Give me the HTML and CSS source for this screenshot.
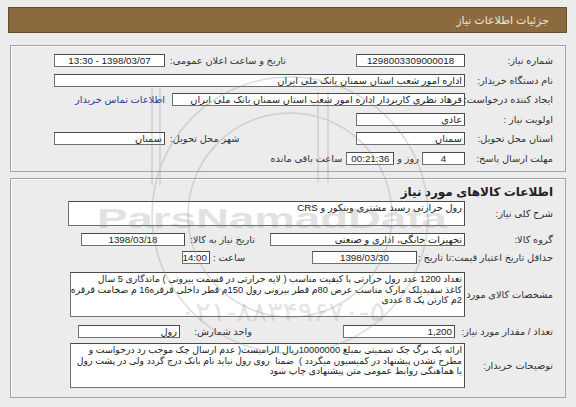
FILE: index.html
```html
<!DOCTYPE html>
<html lang="fa" dir="rtl">
<head>
<meta charset="utf-8">
<title>جزئیات اطلاعات نیاز</title>
<link rel="stylesheet" href="styles.css">
</head>
<body>
<div class="page">
  <div class="header"><span class="header-title">جزئیات اطلاعات نیاز</span></div>

  <div class="panel p1">
    <div class="row">
      <div class="lbl">شماره نیاز:</div>
      <div class="box w109 center">1298003309000018</div>
      <div class="grp">
        <div class="lbl2">تاریخ و ساعت اعلان عمومی:</div>
        <div class="box w111 center">1398/03/07 - 13:30</div>
      </div>
    </div>
    <div class="row">
      <div class="lbl">نام دستگاه خریدار:</div>
      <div class="box grow">اداره امور شعب استان سمنان بانک ملی ایران</div>
    </div>
    <div class="row">
      <div class="lbl">ایجاد کننده درخواست:</div>
      <div class="box w293">فرهاد نظری کاربردار اداره امور شعب استان سمنان بانک ملی ایران</div>
      <a class="link" href="#">اطلاعات تماس خریدار</a>
    </div>
    <div class="row">
      <div class="lbl">اولویت نیاز :</div>
      <div class="box w109">عادی</div>
    </div>
    <div class="row">
      <div class="lbl">استان محل تحویل:</div>
      <div class="box w109">سمنان</div>
      <div class="grp">
        <div class="lbl2">شهر محل تحویل:</div>
        <div class="box w111">سمنان</div>
      </div>
    </div>
    <div class="row">
      <div class="lbl">مهلت ارسال پاسخ:</div>
      <div class="box w43 center">4</div>
      <span class="txt mid">روز و</span>
      <div class="box w48 center">00:21:36</div>
      <span class="txt after">ساعت باقی مانده</span>
    </div>
  </div>

  <div class="panel p2">
    <div class="title">اطلاعات کالاهای مورد نیاز</div>
    <div class="row r-area1">
      <div class="lbl">شرح کلی نیاز:</div>
      <div class="area a25">رول حرارتی رسید مشتری وینکور و CRS</div>
    </div>
    <div class="row r-line m7">
      <div class="lbl">گروه کالا:</div>
      <div class="box w195">تجهیزات خانگی، اداری و صنعتی</div>
      <div class="cell need-date">تاریخ نیاز به کالا:</div>
      <div class="box w104 center">1398/03/18</div>
    </div>
    <div class="row r-line m5">
      <div class="cell-pair">
        <span>حداقل تاریخ اعتبار قیمت:</span>
        <span>تا تاریخ :</span>
      </div>
      <div class="box w105 center">1398/03/30</div>
      <div class="cell time-lbl">ساعت :</div>
      <div class="box w28 center">14:00</div>
    </div>
    <div class="row r-area m8">
      <div class="lbl">مشخصات کالای مورد نیاز:</div>
      <div class="area a45">تعداد 1200 عدد رول حرارتی با کیفیت مناسب ( لایه حرارتی در قسمت بیرونی ) ماندگاری 5 سال<br>کاغذ سفیدبلک مارک مناسب عرض 80م قطر بیرونی رول 150م قطر داخلی قرقره16 م ضخامت قرقره<br>2م کارتن پک 8 عددی</div>
    </div>
    <div class="row r-line m8">
      <div class="lbl">تعداد / مقدار مورد نیاز:</div>
      <div class="box w112 qty">1,200</div>
      <div class="cell unit">واحد شمارش:</div>
      <div class="box w102">رول</div>
    </div>
    <div class="row r-area m5">
      <div class="lbl">توضیحات خریدار:</div>
      <div class="area a45">ارائه یک برگ چک تضمینی بمبلغ 10000000ریال الزامیست( عدم ارسال چک موجب رد درخواست و<br>مطرح نشدن پیشنهاد در کمیسیون میگردد )&nbsp; ضمنا&nbsp; روی رول نباید نام بانک درج گردد ولی در پشت رول<br>با هماهنگی روابط عمومی متن پیشنهادی چاپ شود</div>
    </div>
  </div>

  <svg class="wm" viewBox="0 0 576 407" width="576" height="407" aria-hidden="true">
    <g class="wm-lines">
      <circle cx="290" cy="215" r="138"/>
      <circle cx="290" cy="215" r="102"/>
      <path d="M152 88 V185 M160 88 V185 M318 92 V182 M328 92 V182"/>
    </g>
    <text class="wm-brand" x="97" y="228" textLength="350" lengthAdjust="spacingAndGlyphs">ParsNamadData</text>
    <text class="wm-phone" x="180" y="321" textLength="205" lengthAdjust="spacingAndGlyphs">۰۲۱-۸۸۳۴۹۶۷۰-۵</text>
  </svg>
</div>
</body>
</html>
```
FILE: styles.css
```css
html, body {
  margin: 0;
  padding: 0;
  background: #ececec;
}
body {
  font-family: "Liberation Sans", "DejaVu Sans", sans-serif;
  font-size: 9.8px;
  color: #333;
}
.page {
  position: relative;
  width: 576px;
  height: 407px;
  box-sizing: border-box;
  padding: 7px 9px 0 8px;
  overflow: hidden;
}
.header {
  height: 26px;
  box-sizing: border-box;
  background: #8b6a3f;
  border: 1px solid #6a4e2c;
  display: flex;
  align-items: center;
  padding-right: 17px;
}
.header-title {
  color: #efe5d3;
  font-size: 11px;
}
.panel {
  border: 1px solid #a3a3a3;
  box-shadow: inset 1px 1px 0 #fafafa;
  margin: 0 1px 0 2px;
  background: #ececec;
  display: flex;
  flex-direction: column;
}
.p1 {
  margin-top: 12px;
  padding: 5px 12px 3px 43px;
}
.p2 {
  margin-top: 6px;
  padding: 4px 12px 9px 0;
}
.row {
  display: flex;
  align-items: center;
  height: 19.5px;
}
.lbl {
  width: 88px;
  flex: none;
  white-space: nowrap;
}
.lbl2 {
  white-space: nowrap;
  margin-left: 5px;
}
.grp {
  display: flex;
  align-items: center;
  margin-right: auto;
}
.box {
  height: 13px;
  box-sizing: border-box;
  background: #fff;
  border: 1px solid #707070;
  border-top-color: #4a4a4a;
  border-right-color: #4a4a4a;
  color: #222;
  line-height: 11px;
  padding: 0 2px;
  white-space: nowrap;
  overflow: hidden;
  flex: none;
}
.center { text-align: center; }
.grow { flex: 1; }
.w28 { width: 28px; }
.w43 { width: 43px; }
.w48 { width: 48px; }
.w102 { width: 102px; }
.w104 { width: 104px; }
.w105 { width: 105px; }
.w109 { width: 109px; }
.w111 { width: 111px; }
.w112 { width: 112px; }
.w195 { width: 195px; }
.w293 { width: 293px; }
.link {
  color: #2e3a9a;
  text-decoration: none;
  margin-right: 7px;
  white-space: nowrap;
}
.txt { white-space: nowrap; }
.mid { margin: 0 3px; }
.after { margin-right: 4px; }

.title {
  height: 18px;
  line-height: 18px;
  font-weight: bold;
  font-size: 12px;
  color: #222;
}
.r-area1 { height: 25px; }
.r-area { height: 45px; }
.r-line { height: 13px; }
.m5 { margin-top: 5px; }
.m7 { margin-top: 7px; }
.m8 { margin-top: 8px; }
.area {
  box-sizing: border-box;
  background: #fff;
  border: 1px solid #707070;
  border-top-color: #4a4a4a;
  border-right-color: #4a4a4a;
  color: #222;
  width: 395px;
  align-self: stretch;
  padding: 1px 2px 0 2px;
  font-size: 9.3px;
  line-height: 10.5px;
  white-space: nowrap;
  overflow: hidden;
  flex: none;
}
.a25 { width: 397px; font-size: 9.8px; }
.cell {
  flex: none;
  white-space: nowrap;
  box-sizing: border-box;
}
.need-date { width: 85px; padding-right: 15px; }
.unit { width: 163px; padding-right: 91px; }
.qty { margin-right: 10px; }
.cell-pair {
  flex: none;
  width: 128px;
  margin-left: 8px;
  display: flex;
  justify-content: space-between;
  white-space: nowrap;
}
.time-lbl { width: 99px; text-align: left; margin-left: 3px; }

.wm {
  position: absolute;
  left: 0;
  top: 0;
  pointer-events: none;
  direction: ltr;
}
.wm-lines {
  fill: none;
  stroke: #8c8c8c;
  stroke-width: 1.5;
  opacity: 0.3;
}
.wm-brand {
  font-family: "Liberation Sans", sans-serif;
  font-weight: bold;
  font-size: 28px;
  fill: #7d7d7d;
  opacity: 0.22;
}
.wm-phone {
  font-family: "DejaVu Sans", sans-serif;
  font-size: 27px;
  fill: #7d7d7d;
  opacity: 0.2;
}
```
